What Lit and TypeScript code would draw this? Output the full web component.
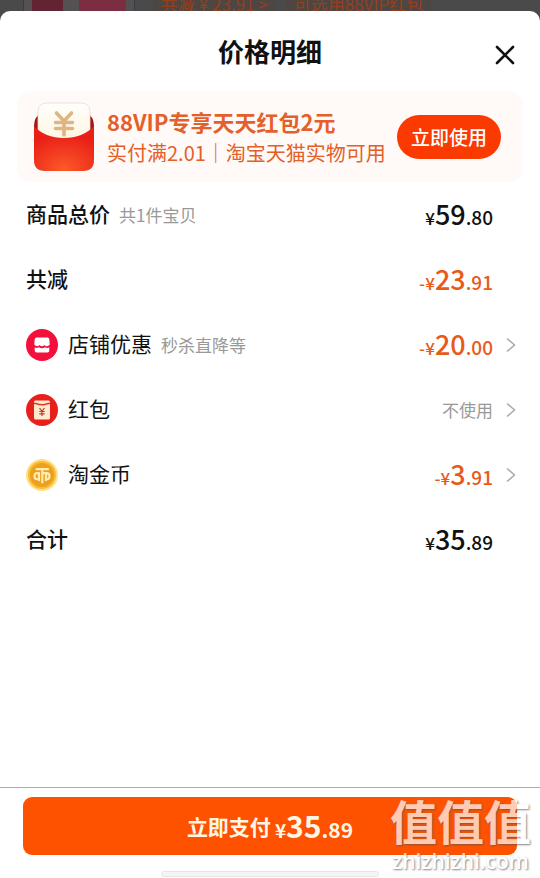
import { LitElement, html, css, svg, nothing } from "lit";
import { customElement, property } from "lit/decorators.js";

const shopIcon = svg`
  <svg class="icon" viewBox="0 0 32 32" width="32" height="32" aria-hidden="true">
    <circle cx="16" cy="16" r="16" fill="#f50f3d" />
    <path d="M10.500 8.500h11q1.500 0 1.700 1.500l.6 5.500q-1.300 1.700-2.900 1.700-1.400 0-2.400-1.200-1 1.200-2.500 1.200t-2.500-1.200q-1 1.200-2.400 1.200-1.600 0-2.900-1.700l.6-5.500q.2-1.500 1.700-1.500z" fill="#fff" />
    <path d="M8.700 18.500q2.200 1 4.300-.3 1.500 1 3 1t3-1q2.100 1.300 4.300.3v3q0 2-2 2H10.700q-2 0-2-2z" fill="#fff" />
  </svg>`;

const packetIcon = svg`
  <svg class="icon" viewBox="0 0 32 32" width="32" height="32" aria-hidden="true">
    <circle cx="16" cy="16" r="16" fill="#e8201c" />
    <rect x="8" y="6.500" width="16" height="19" rx="1.500" fill="#ffe9cf" />
    <path d="M8 9.500h2q6 2.500 12 0h2" fill="none" stroke="#dc3a2c" stroke-width="1.400" />
    <path d="M13.500 14l2.500 3.200 2.500-3.200M16 17v5M13.300 17.500h5.400M13.300 19.800h5.400" fill="none" stroke="#b9402c" stroke-width="1.200" />
  </svg>`;

const coinIcon = svg`
  <svg class="icon" viewBox="0 0 32 32" width="32" height="32" aria-hidden="true">
    <circle cx="16" cy="16" r="16" fill="#ffe08a" />
    <circle cx="16" cy="16" r="14" fill="#f8bd35" />
    <circle cx="16" cy="16" r="12" fill="#eba01f" />
    <path d="M10.500 10.200h11.500M16.300 10.500v13M13 14.200h-2q-2.500 0-2.500 3t2.500 3M13 14.200v7M16.300 14.200h4.200q3 0 3 3t-2.500 3M20 14.200v7" fill="none" stroke="#ffebb0" stroke-width="2.200" stroke-linecap="round" stroke-linejoin="round" />
  </svg>`;

@customElement("price-amount")
class PriceAmount extends LitElement {
  @property() value = "0.00";
  @property({ type: Boolean }) minus = false;

  static styles = css`
    :host {
      font-size: 19px;
      white-space: nowrap;
    }
    .sign {
      font-size: 17px;
    }
    .whole {
      font-size: 27px;
    }
    :host([large]) {
      font-size: 21px;
    }
    :host([large]) .whole {
      font-size: 30px;
    }
    :host([large]) .sign {
      font-size: 19px;
    }
  `;

  render() {
    const [whole, cents] = this.value.split(".");
    return html`<span class="sign">${this.minus ? "-" : nothing}¥</span><span class="whole">${whole}</span>.${cents}`;
  }
}

@customElement("app-root")
class AppRoot extends LitElement {
  static styles = css`
    * {
      box-sizing: border-box;
    }
    :host {
      display: flex;
      flex-direction: column;
      position: relative;
      min-height: 100vh;
      background: #4a4a4a;
      color: #111;
      font-family: "Noto Sans CJK SC", sans-serif;
    }
    button {
      border: 0;
      background: none;
      color: inherit;
      font: inherit;
      padding: 0;
      cursor: pointer;
    }
    .behind {
      display: flex;
      align-items: flex-end;
      gap: 10px;
      height: 11px;
      padding-left: 23px;
      overflow: hidden;
      color: #94401f;
      font-size: 17px;
      line-height: 14px;
      white-space: nowrap;
    }
    .thumb {
      display: flex;
      gap: 16px;
      flex: none;
      width: 112px;
      height: 11px;
      margin-right: 8px;
      padding: 0 8px;
      border: solid #353c46;
      border-width: 0 1px;
      background: #555052;
    }
    .thumb i {
      flex: 2;
      background: #622432;
    }
    .thumb i + i {
      flex: 3;
      background: #7b2d42;
    }
    .tag {
      padding: 0 8px;
      background: #4e4643;
    }
    .sheet {
      display: flex;
      flex-direction: column;
      flex: 1;
      border-radius: 10px 10px 0 0;
      background: #fff;
    }
    .head {
      display: grid;
      grid-template-columns: 50px 1fr 50px;
      align-items: center;
      height: 80px;
      padding: 0 10px;
    }
    h1 {
      grid-column: 2;
      margin: 0;
      font-size: 26px;
      font-weight: 700;
      line-height: 40px;
      text-align: center;
    }
    .close {
      display: grid;
      place-items: center;
      height: 56px;
      padding-top: 8px;
    }
    .coupon {
      display: flex;
      align-items: center;
      gap: 13px;
      height: 91px;
      margin: 0 17px;
      padding: 0 22px 0 17px;
      border-radius: 14px;
      background: #fff9f7;
      color: #e4602a;
      white-space: nowrap;
    }
    .coupon svg {
      flex: none;
    }
    .offer {
      flex: 1;
      min-width: 0;
      font-size: 20px;
      line-height: 32px;
    }
    .offer p {
      margin: 0;
    }
    .offer .name {
      font-size: 22px;
      font-weight: 700;
    }
    .use {
      flex: none;
      width: 104px;
      height: 44px;
      border-radius: 22px;
      background: #fb3a02;
      color: #fff;
      font-size: 19px;
      font-weight: 500;
    }
    ul {
      flex: 1;
      margin: 0;
      padding: 0;
      list-style: none;
    }
    .row {
      display: flex;
      align-items: center;
      width: 100%;
      height: 65px;
      padding: 0 24px 0 26px;
      font-size: 21px;
      text-align: left;
    }
    .icon {
      margin-right: 10px;
    }
    .label,
    price-amount.value {
      padding-bottom: 3px;
    }
    .strong {
      font-weight: 500;
    }
    .note {
      margin-left: 9px;
      color: #999;
      font-size: 17px;
    }
    .value {
      margin-left: auto;
      font-weight: 500;
    }
    .off {
      color: #e85a1a;
    }
    .unused {
      color: #999;
      font-size: 17px;
      font-weight: 400;
    }
    .end {
      display: flex;
      justify-content: flex-end;
      flex: none;
      width: 23px;
    }
    footer {
      display: flex;
      flex-direction: column;
      align-items: center;
      padding: 9px 23px 1px;
      border-top: 1px solid #a9acb8;
    }
    .pay {
      display: flex;
      align-items: center;
      justify-content: center;
      gap: 4px;
      width: 100%;
      height: 58px;
      border-radius: 9px;
      background: #ff5200;
      color: #fff6e6;
      font-size: 21px;
      font-weight: 700;
    }
    .pay price-amount {
      padding-bottom: 3px;
    }
    .home {
      width: 218px;
      height: 6px;
      margin-top: 16px;
      border: 1px solid #e6e6e6;
      border-radius: 3px;
      background: #f5f5f5;
    }
    .mark {
      position: absolute;
      right: 9px;
      bottom: 5px;
      color: #fff;
      opacity: 0.7;
      text-align: center;
      text-shadow: 1px 1px 2px #555;
      pointer-events: none;
    }
    .mark b {
      display: block;
      margin-bottom: 4px;
      font-size: 47px;
      line-height: 50px;
    }
    .mark span {
      display: block;
      font-family: "Open Sans", sans-serif;
      font-size: 21px;
      font-weight: 600;
      line-height: 24px;
    }
  `;

  private chevron() {
    return html`<svg viewBox="0 0 10 16" width="10" height="16" aria-hidden="true">
      <path d="M1 1.500L8.500 8 1 14.500" fill="none" stroke="#aaa" stroke-width="1.500" />
    </svg>`;
  }

  private total(label: string, value: string, note = "", minus = false) {
    return html`<li class="row">
      <span class="label strong">${label}</span>
      ${note ? html`<span class="note">${note}</span>` : nothing}
      <price-amount class="value ${minus ? "off" : ""}" value=${value} ?minus=${minus}></price-amount>
      <span class="end"></span>
    </li>`;
  }

  private discount(icon: unknown, label: string, value: string, note = "") {
    return html`<li>
      <button class="row">
        ${icon}<span class="label">${label}</span>
        ${note ? html`<span class="note">${note}</span>` : nothing}
        ${value
          ? html`<price-amount class="value off" value=${value} minus></price-amount>`
          : html`<span class="value unused">不使用</span>`}
        <span class="end">${this.chevron()}</span>
      </button>
    </li>`;
  }

  render() {
    return html`
      <div class="behind" aria-hidden="true">
        <div class="thumb"><i></i><i></i></div>
        <span class="tag">共减 ¥ 23.91 &gt;</span>
        <span class="tag">可选用88VIP红包</span>
      </div>
      <main class="sheet">
        <header class="head">
          <h1>价格明细</h1>
          <button class="close" aria-label="关闭">
            <svg viewBox="0 0 20 20" width="20" height="20">
              <path d="M2 2l16 16M18 2L2 18" stroke="#111" stroke-width="2.600" stroke-linecap="round" />
            </svg>
          </button>
        </header>
        <section class="coupon">
          <svg viewBox="0 0 60 70" width="60" height="70" aria-hidden="true">
            <defs>
              <radialGradient id="pocket" cx="50%" cy="95%" r="75%">
                <stop offset="0" stop-color="#fb5a28" />
                <stop offset="1" stop-color="#ea2018" />
              </radialGradient>
              <linearGradient id="card" x1="0" y1="0" x2="0" y2="1">
                <stop offset="0" stop-color="#fffefb" />
                <stop offset="1" stop-color="#fdf5dc" />
              </linearGradient>
            </defs>
            <path d="M0 24q0-10 8-13h44q8 3 8 13v14H0z" fill="#a91512" />
            <path d="M4 44V10Q4 1 13 1h34q9 0 9 9v34z" fill="url(#card)" stroke="#e6dcd4" stroke-width=".8" />
            <path d="M22.500 11l7.500 8 7.500-8M30 19v14M21.500 20.500h17M21.500 26.500h17" fill="none" stroke="#dfb583" stroke-width="3.600" stroke-linecap="round" />
            <path d="M0 24q11 12 30 12t30-12v34q0 11-11 11H11Q0 69 0 58z" fill="url(#pocket)" />
          </svg>
          <div class="offer">
            <p class="name">88VIP专享天天红包2元</p>
            <p>实付满2.01｜淘宝天猫实物可用</p>
          </div>
          <button class="use">立即使用</button>
        </section>
        <ul>
          ${this.total("商品总价", "59.80", "共1件宝贝")}
          ${this.total("共减", "23.91", "", true)}
          ${this.discount(shopIcon, "店铺优惠", "20.00", "秒杀直降等")}
          ${this.discount(packetIcon, "红包", "")}
          ${this.discount(coinIcon, "淘金币", "3.91")}
          ${this.total("合计", "35.89")}
        </ul>
        <footer>
          <button class="pay">立即支付<price-amount large value="35.89"></price-amount></button>
          <div class="home"></div>
        </footer>
      </main>
      <div class="mark"><b>值值值</b><span>zhizhizhi.com</span></div>
    `;
  }
}
